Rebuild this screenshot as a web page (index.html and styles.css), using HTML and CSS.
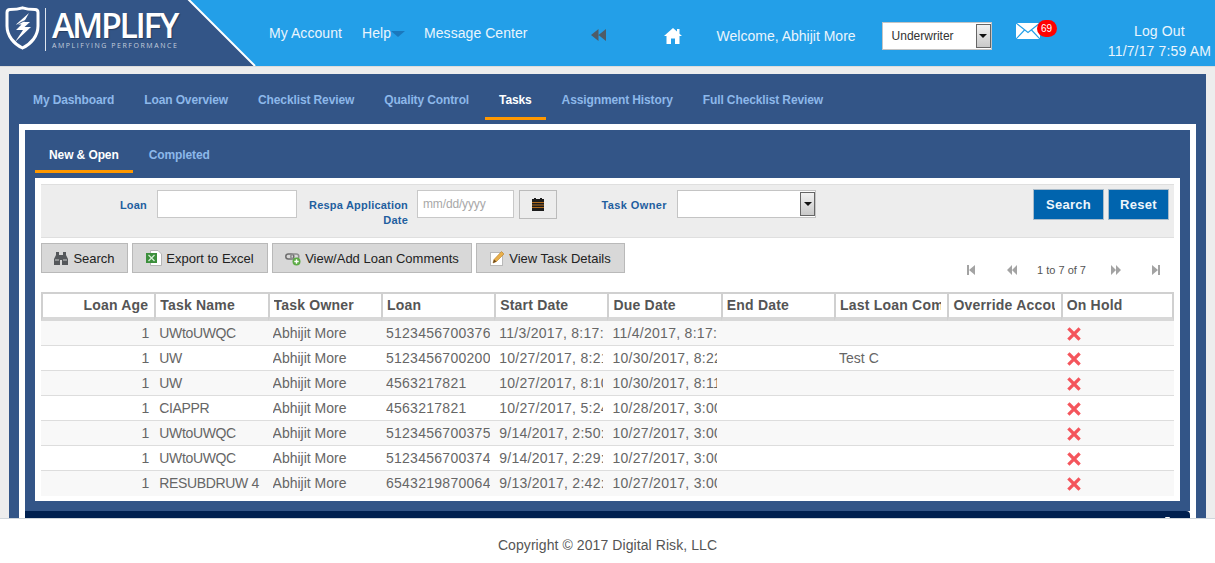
FILE: index.html
```html
<!DOCTYPE html>
<html>
<head>
    <title>Amplify - Tasks</title>
    <link rel="stylesheet" href="styles.css">
</head>
<body>
    <header class="topbar">
        <div class="brand">
            <svg class="brand-bg" width="256" height="66" viewBox="0 0 256 66">
                <polygon points="0,0 188,0 254,66 0,66" fill="#335587"/>
                <line x1="188" y1="-1" x2="255" y2="66" stroke="#fff" stroke-width="2"/>
            </svg>
            <svg class="brand-shield" width="35" height="44" viewBox="0 0 35 44">
                <path d="M5 3.500C10 3.500 14 3 17.500 1.800C21 3 25 3.500 30 3.500C32 3.500 33 4.500 33 6.500V20C33 30 26 38 17.500 42C9 38 2 30 2 20V6.500C2 4.500 3 3.500 5 3.500Z" fill="none" stroke="#fff" stroke-width="3"/>
                <path d="M24 7L11 18.500L16.500 18.500L11 24L18 24L10 36L26 21L19.500 21L25 16L19 16Z" fill="#fff"/>
                <path d="M8 23C13 17 21 13.500 28 12.500" fill="none" stroke="#335587" stroke-width="1"/>
            </svg>
            <div class="brand-rule"></div>
            <div class="brand-text">
                <div class="brand-name">AMPLIFY</div>
                <div class="brand-tag">AMPLIFYING PERFORMANCE</div>
            </div>
        </div>
        <nav class="topnav">
            <a>My Account</a>
            <a class="help">Help<span class="help-caret"></span></a>
            <a>Message Center</a>
        </nav>
        <svg class="back-icon" width="15" height="14" viewBox="0 0 15 14">
            <path d="M7.500 1V13L0 7ZM15 1V13L7.500 7Z" fill="#4f5c66"/>
        </svg>
        <svg class="home-icon" width="18" height="16" viewBox="0 0 18 16">
            <path d="M9 0L13 3.500V1H15.500V5.800L18 8H15.500V16H11V10.500H7V16H2.500V8H0Z" fill="#fff"/>
        </svg>
        <span class="welcome">Welcome, Abhijit More</span>
        <div class="select role-select">
            <span class="select-value">Underwriter</span>
            <span class="select-btn"><i></i></span>
        </div>
        <div class="mail">
            <svg width="24" height="16" viewBox="0 0 24 16">
                <rect width="24" height="16" fill="#fff"/>
                <path d="M0 0L12 9.500L24 0M0 16L8.500 7M24 16L15.500 7" fill="none" stroke="#239fe8" stroke-width="1.200"/>
            </svg>
            <span class="mail-badge">69</span>
        </div>
        <div class="session">
            <div class="logout">Log Out</div>
            <div>11/7/17 7:59 AM</div>
        </div>
    </header>

    <main class="shell">
        <div class="board">
            <nav class="tabs">
                <a>My Dashboard</a>
                <a>Loan Overview</a>
                <a>Checklist Review</a>
                <a>Quality Control</a>
                <a class="active">Tasks</a>
                <a>Assignment History</a>
                <a>Full Checklist Review</a>
            </nav>
            <div class="sheet">
                <div class="panel">
                    <nav class="subtabs">
                        <a class="active">New &amp; Open</a>
                        <a>Completed</a>
                    </nav>
                    <div class="content">
                        <form class="filters">
                            <label class="filter-label loan-label">Loan</label>
                            <input class="field loan-field" type="text">
                            <label class="filter-label respa-label">Respa Application Date</label>
                            <input class="field date-field" type="text" placeholder="mm/dd/yyyy">
                            <button type="button" class="cal-btn">
                                <svg width="12" height="13" viewBox="0 0 12 13">
                                    <rect y="1" width="12" height="12" fill="#1c1c1c"/>
                                    <rect x="2" width="2" height="2" fill="#1c1c1c"/>
                                    <rect x="8" width="2" height="2" fill="#1c1c1c"/>
                                    <path d="M0 4.500H12M0 7H12M0 9.500H12" stroke="#d9831f" stroke-width=".8"/>
                                </svg>
                            </button>
                            <label class="filter-label owner-label">Task Owner</label>
                            <div class="select owner-select"><span class="select-value"></span><span class="select-btn"><i></i></span></div>
                            <div class="filter-actions">
                                <button type="button" class="primary search-btn">Search</button>
                                <button type="button" class="primary reset-btn">Reset</button>
                            </div>
                        </form>

                        <div class="toolbar">
                            <div class="actions">
                                <button type="button" class="action search-action">
                                    <svg width="14" height="13" viewBox="0 0 14 13">
                                        <path d="M2 0H5V3H9V0H12V3L14 7V13H8V8H6V13H0V7L2 3Z" fill="#55585b"/>
                                        <path d="M1 8H5M9 8H13" stroke="#c8c8c8" stroke-width="1"/>
                                    </svg>
                                    Search
                                </button>
                                <button type="button" class="action export-action">
                                    <svg width="16" height="16" viewBox="0 0 16 16">
                                        <path d="M4.500 .5H12L15.500 4V15.500H4.500Z" fill="#fff" stroke="#b5b5b5"/>
                                        <rect y="3" width="11" height="10" fill="#3c8f3c"/>
                                        <path d="M2.500 5L8.500 11M8.500 5L2.500 11" stroke="#d5ecd5" stroke-width="1.300"/>
                                    </svg>
                                    Export to Excel
                                </button>
                                <button type="button" class="action comments-action">
                                    <svg width="16" height="15" viewBox="0 0 16 15">
                                        <rect x=".8" y="3" width="8" height="5" rx="2.500" fill="none" stroke="#6d6d6d" stroke-width="1.500"/>
                                        <rect x="5.800" y="3" width="8" height="5" rx="2.500" fill="none" stroke="#8d8d8d" stroke-width="1.500"/>
                                        <circle cx="11.500" cy="10.500" r="4" fill="#5dab45"/>
                                        <path d="M9.300 10.500H13.700M11.500 8.300V12.700" stroke="#fff" stroke-width="1.400"/>
                                    </svg>
                                    View/Add Loan Comments
                                </button>
                                <button type="button" class="action details-action">
                                    <svg width="15" height="16" viewBox="0 0 15 16">
                                        <rect x=".5" y="2.500" width="12" height="13" fill="#fff" stroke="#b9b9b9"/>
                                        <path d="M3 13L4 9.500L11.500 1.500L14 4L6.500 11.500Z" fill="#e9b04c" stroke="#b9802a" stroke-width=".6"/>
                                        <path d="M3 13L4 9.500L6.500 11.500Z" fill="#6b4a20"/>
                                    </svg>
                                    View Task Details
                                </button>
                            </div>
                            <div class="pager">
                                <svg class="pager-first" width="8" height="10" viewBox="0 0 8 10"><path d="M0 0H2V10H0ZM8 0V10L2 5Z" fill="#a3a3a3"/></svg>
                                <svg class="pager-prev" width="10" height="10" viewBox="0 0 10 10"><path d="M5 0V10L0 5ZM10 0V10L5 5Z" fill="#a3a3a3"/></svg>
                                <span class="pager-text">1 to 7 of 7</span>
                                <svg class="pager-next" width="10" height="10" viewBox="0 0 10 10"><path d="M0 0V10L5 5ZM5 0V10L10 5Z" fill="#a3a3a3"/></svg>
                                <svg class="pager-last" width="8" height="10" viewBox="0 0 8 10"><path d="M0 0L6 5L0 10ZM6 0H8V10H6Z" fill="#a3a3a3"/></svg>
                            </div>
                        </div>

                        <table class="grid">
                            <thead>
                                <tr>
                                    <th><div class="cell num">Loan Age</div></th>
                                    <th><div class="cell">Task Name</div></th>
                                    <th><div class="cell">Task Owner</div></th>
                                    <th><div class="cell">Loan</div></th>
                                    <th><div class="cell">Start Date</div></th>
                                    <th><div class="cell">Due Date</div></th>
                                    <th><div class="cell">End Date</div></th>
                                    <th><div class="cell">Last Loan Comment</div></th>
                                    <th><div class="cell">Override Account</div></th>
                                    <th><div class="cell">On Hold</div></th>
                                </tr>
                            </thead>
                            <tbody id="task_rows"></tbody>
                        </table>
                    </div>
                </div>
                <div class="bottom-bar"><span class="bar-speck"></span></div>
            </div>
        </div>
    </main>

    <footer class="footer">Copyright © 2017 Digital Risk, LLC</footer>

    <script>
        const tasks = [
            ["UWtoUWQC", "5123456700376", "11/3/2017, 8:17:00 AM", "11/4/2017, 8:17:00 AM", ""],
            ["UW", "5123456700200", "10/27/2017, 8:21:00 AM", "10/30/2017, 8:22:00 AM", "Test C"],
            ["UW", "4563217821", "10/27/2017, 8:10:00 AM", "10/30/2017, 8:11:00 AM", ""],
            ["CIAPPR", "4563217821", "10/27/2017, 5:24:00 AM", "10/28/2017, 3:00:00 PM", ""],
            ["UWtoUWQC", "5123456700375", "9/14/2017, 2:50:00 AM", "10/27/2017, 3:00:00 PM", ""],
            ["UWtoUWQC", "5123456700374", "9/14/2017, 2:29:00 AM", "10/27/2017, 3:00:00 PM", ""],
            ["RESUBDRUW 4", "6543219870064", "9/13/2017, 2:42:00 AM", "10/27/2017, 3:00:00 PM", ""]
        ];

        const crossIcon = '<svg class="cross" width="14" height="14" viewBox="0 0 14 14"><path d="M2.500 2.500L11.500 11.500M11.500 2.500L2.500 11.500" stroke="#f4555c" stroke-width="3.200" stroke-linecap="square"/></svg>';

        function cell(text, extra) {
            return '<td><div class="cell' + (extra || "") + '">' + text + "</div></td>";
        }

        // Fill the task grid
        document.getElementById("task_rows").innerHTML = tasks.map(function (task) {
            return "<tr>" +
                cell("1", " num") +
                cell(task[0], " code") +
                cell("Abhijit More") +
                cell(task[1], " digits") +
                cell(task[2], " digits") +
                cell(task[3], " digits") +
                cell("") +
                cell(task[4]) +
                cell("") +
                cell(crossIcon) +
                "</tr>";
        }).join("");
    </script>
</body>
</html>
```

FILE: styles.css
```css
* {
    box-sizing: border-box;
}

html, body {
    height: 100%;
}

body {
    margin: 0;
    font-family: "Liberation Sans", Arial, sans-serif;
    font-size: 14px;
    color: #555;
    background-color: #fff;
    display: flex;
    flex-direction: column;
    overflow: hidden;
}

/* Top bar */
.topbar {
    height: 66px;
    flex: none;
    display: flex;
    align-items: center;
    background-color: #239fe8;
    color: #eaf5fd;
}

.brand {
    position: relative;
    width: 256px;
    height: 66px;
    flex: none;
    display: flex;
    align-items: flex-start;
}

.brand-bg {
    position: absolute;
    left: 0;
    top: 0;
}

.brand-shield {
    position: relative;
    margin: 6px 0 0 5px;
}

.brand-rule {
    position: relative;
    width: 1px;
    height: 43px;
    margin: 8px 0 0 5px;
    background-color: #dfe6ef;
}

.brand-text {
    position: relative;
    margin: 9px 0 0 6px;
    color: #fff;
}

.brand-name {
    font-family: "Open Sans", sans-serif;
    font-size: 34px;
    font-weight: 600;
    line-height: 32px;
    letter-spacing: -2.4px;
    text-shadow: 1px 1px 1px rgba(0, 0, 0, 0.3);
}

.brand-tag {
    font-family: "Open Sans", sans-serif;
    font-size: 7px;
    line-height: 9px;
    letter-spacing: 1.55px;
    white-space: nowrap;
    color: #c3cedd;
}

.topnav {
    display: flex;
    gap: 20px;
    margin-left: 13px;
    margin-top: -1px;
    letter-spacing: 0.06px;
}

.help {
    display: flex;
    align-items: center;
    margin-right: -1px;
}

.help-caret {
    width: 0;
    height: 0;
    margin-top: 2px;
    border: 7px solid transparent;
    border-top: 6px solid #1a78bd;
    border-bottom: 0;
}

.back-icon {
    margin: 3px 0 0 63px;
}

.home-icon {
    margin: 5px 0 0 58px;
}

.welcome {
    margin: 5px 0 0 35px;
}

/* Dropdowns are drawn by hand */
.select {
    display: flex;
    align-items: stretch;
    height: 28px;
    border: 1px solid #c4c4c4;
    background-color: #fff;
}

.select-value {
    flex: 1;
    padding: 0 9px;
    font-size: 12px;
    line-height: 26px;
    color: #333;
}

.select-btn {
    width: 15px;
    margin: 1px 0;
    display: flex;
    align-items: center;
    justify-content: center;
    border: 1px solid #666;
    background: linear-gradient(#f2f2f2, #c9c9c9);
}

.select-btn i {
    width: 0;
    height: 0;
    border: 4px solid transparent;
    border-top: 4px solid #111;
    border-bottom: 0;
}

.role-select {
    width: 110px;
    margin: 6px 0 0 26px;
}

.mail {
    position: relative;
    margin: -4px 0 0 24px;
    height: 16px;
    line-height: 0;
}

.mail-badge {
    position: absolute;
    left: 21px;
    top: -3px;
    width: 20px;
    height: 17px;
    border-radius: 9px;
    background-color: #f00;
    color: #fff;
    font-size: 10px;
    line-height: 17px;
    text-align: center;
}

.session {
    margin-left: auto;
    margin-right: 4px;
    margin-top: 16px;
    text-align: center;
    line-height: 20px;
    letter-spacing: 0.15px;
}

/* Page shell */
.shell {
    height: 453px;
    flex: none;
    padding: 7px 9px 0;
    overflow: hidden;
    background-color: #ededed;
    border-top: 1px solid #dcdcdc;
    border-bottom: 1px solid #cfd6dc;
}

.board {
    height: 100%;
    padding: 0 10px;
    background-color: #335587;
}

.tabs {
    display: flex;
    height: 50px;
    padding-top: 11px;
}

.tabs a {
    height: 35px;
    padding: 7px 14px 0;
    margin: 0 1px;
    font-size: 12px;
    font-weight: bold;
    line-height: 16px;
    letter-spacing: -0.12px;
    color: #8db8ea;
}

.tabs a:first-child {
    margin-left: 0;
}

.tabs a.active {
    color: #fff;
    border-bottom: 3px solid #ff9800;
}

.sheet {
    padding: 6px;
    height: 395px;
    background-color: #fff;
}

.panel {
    height: 381px;
    padding: 0 10px 10px;
    background-color: #335587;
}

.subtabs {
    display: flex;
    height: 48px;
    padding-top: 11px;
}

.subtabs a {
    height: 32px;
    padding: 6px 14px 0;
    margin-right: 2px;
    font-size: 12px;
    font-weight: bold;
    line-height: 16px;
    letter-spacing: -0.1px;
    color: #8db8ea;
}

.subtabs a.active {
    color: #fff;
    border-bottom: 3px solid #ff9800;
}

.content {
    height: 323px;
    padding: 6px 6px 0;
    background-color: #fff;
}

/* Filter band */
.filters {
    display: flex;
    align-items: flex-start;
    height: 54px;
    padding-top: 5px;
    background-color: #ededed;
    border: 1px solid #dfdfdf;
    border-left: 0;
    border-right: 0;
}

.filter-label {
    font-size: 11px;
    font-weight: bold;
    line-height: 15px;
    color: #1f5f9f;
    text-align: right;
    letter-spacing: 0.2px;
}

.loan-label {
    width: 106px;
    margin-top: 8px;
}

.field {
    height: 28px;
    padding: 0 5px;
    border: 1px solid #c8c8c8;
    background-color: #fff;
    font-family: inherit;
    font-size: 12px;
    letter-spacing: -0.15px;
    outline: none;
}

.field::placeholder {
    color: #a8a8a8;
}

.loan-field {
    width: 140px;
    margin-left: 10px;
}

.respa-label {
    width: 100px;
    margin: 8px 0 0 11px;
}

.date-field {
    width: 97px;
    margin-left: 9px;
}

.cal-btn {
    width: 38px;
    height: 29px;
    margin-left: 5px;
    padding: 0;
    display: flex;
    align-items: center;
    justify-content: center;
    background-color: #ededed;
    border: 1px solid #bbb;
}

.owner-label {
    width: 66px;
    margin: 8px 0 0 44px;
    letter-spacing: 0.4px;
}

.owner-select {
    width: 139px;
    margin-left: 10px;
}

.filter-actions {
    display: flex;
    gap: 4px;
    margin-left: auto;
    margin-right: 5px;
    margin-top: -1px;
}

.primary {
    height: 31px;
    padding: 0;
    font-family: inherit;
    font-size: 13px;
    font-weight: bold;
    letter-spacing: 0.3px;
    color: #eef6fc;
    background-color: #0064ae;
    border: 1px solid #a9bccb;
}

.search-btn {
    width: 71px;
}

.reset-btn {
    width: 61px;
}

/* Action buttons and pager */
.toolbar {
    display: flex;
    justify-content: space-between;
    height: 54px;
    padding-top: 5px;
}

.actions {
    display: flex;
    gap: 4px;
    align-items: flex-start;
}

.action {
    display: flex;
    align-items: center;
    justify-content: center;
    gap: 4px;
    height: 30px;
    padding: 0;
    font-family: inherit;
    font-size: 13px;
    color: #222;
    background-color: #d8d8d8;
    border: 1px solid #b9b9b9;
    white-space: nowrap;
}

.search-action {
    width: 87px;
    gap: 5px;
}

.export-action {
    width: 136px;
}

.comments-action {
    width: 200px;
}

.details-action {
    width: 149px;
}

.pager {
    display: flex;
    align-items: center;
    height: 16px;
    margin-top: 19px;
    margin-right: 14px;
}

.pager-text {
    margin: 0 25px 0 20px;
    font-size: 11px;
    color: #555;
}

.pager-first {
    margin-right: 32px;
}

.pager-next {
    margin-right: 31px;
}

/* Task grid */
.grid {
    width: 1133px;
    table-layout: fixed;
    border-collapse: separate;
    border-spacing: 0;
}

.grid th {
    height: 29px;
    padding: 0 6px 2px 4px;
    font-size: 14px;
    font-weight: bold;
    text-align: left;
    letter-spacing: 0.2px;
    color: #555;
    background-color: #fff;
    border-top: 2px solid #d0d0d0;
    border-left: 2px solid #d0d0d0;
    border-bottom: 4px solid #d8d8d8;
}

.grid th:first-child .cell {
    padding-right: 0;
}

.grid th:last-child {
    border-right: 2px solid #d0d0d0;
}

.grid td {
    height: 25px;
    padding: 0 4px 0 5px;
    color: #666;
    border-bottom: 1px solid #ddd;
}

.cell {
    overflow: hidden;
    white-space: nowrap;
}

.cell.num {
    text-align: right;
    padding-right: 1px;
}

.cell.digits {
    letter-spacing: 0.28px;
}

.cell.code {
    letter-spacing: -0.35px;
}

.grid tbody tr:nth-child(odd) {
    background-color: #f8f8f8;
}

.grid tbody tr:last-child td {
    border-bottom-color: transparent;
}

.cross {
    display: block;
    margin: 1px 0 0 1px;
}

.bottom-bar {
    position: relative;
    height: 8px;
    background-color: #002050;
    border-radius: 0 4px 0 0;
}

.bar-speck {
    position: absolute;
    right: 20px;
    bottom: 0;
    width: 5px;
    height: 2px;
    border-radius: 2px;
    background-color: #fff;
}

.footer {
    flex: 1;
    padding-top: 18px;
    text-align: center;
    font-size: 14px;
    letter-spacing: 0.08px;
    color: #555;
    background-color: #fff;
}
```
